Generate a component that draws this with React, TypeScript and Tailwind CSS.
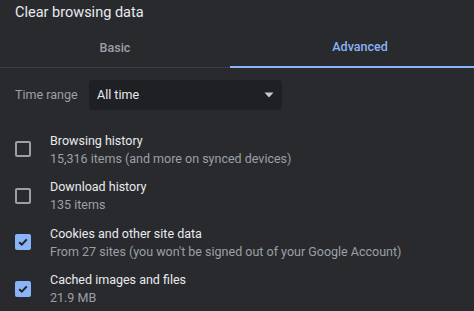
import React from "react";

type Item = { title: string; detail: string; checked: boolean };

const items: Item[] = [
  { title: "Browsing history", detail: "15,316 items (and more on synced devices)", checked: false },
  { title: "Download history", detail: "135 items", checked: false },
  { title: "Cookies and other site data", detail: "From 27 sites (you won't be signed out of your Google Account)", checked: true },
  { title: "Cached images and files", detail: "21.9 MB", checked: true },
];

const Checkbox = ({ checked }: { checked: boolean }) =>
  checked ? (
    <div className="flex h-[16px] w-[16px] items-center justify-center rounded-[2px] bg-[#8ab4f8]">
      <svg width="12" height="12" viewBox="0 0 12 12">
        <path d="M2.2 6.2 L4.8 8.6 L9.8 3.4" fill="none" stroke="#202124" strokeWidth="2" />
      </svg>
    </div>
  ) : (
    <div className="h-[16px] w-[16px] rounded-[2px] border-2 border-[#9aa0a6]" />
  );

export default function App() {
  return (
    <div
      className="h-[311px] w-[474px] overflow-hidden bg-[#292a2d] text-[#e8eaed]"
      style={{ fontFamily: "Roboto, 'Liberation Sans', sans-serif" }}
    >
      {/* Title */}
      <div className="h-[27px] pl-[15px] pt-[3px] text-[14.5px] leading-[20px]">Clear browsing data</div>

      {/* Tabs */}
      <div className="flex h-[41px] items-stretch">
        <div className="flex w-[230px] items-center justify-center border-b border-[#3c4043] pt-[2px] text-[12.5px] font-medium text-[#9aa0a6]">
          Basic
        </div>
        <div className="flex flex-1 items-center justify-center border-b-2 border-[#8ab4f8] pl-[16px] pt-[2px] text-[12.5px] font-medium text-[#8ab4f8]">
          Advanced
        </div>
      </div>

      {/* Time range */}
      <div className="mt-[12px] flex items-center pl-[15px]">
        <div className="w-[74px] pt-[1px] text-[12.5px] text-[#9aa0a6]">Time range</div>
        <div className="flex h-[30px] w-[193px] items-center justify-between rounded-[4px] bg-[#1f2023] pl-[8px] pr-[8px] text-[12.5px]">
          <span>All time</span>
          <svg width="10" height="6" viewBox="0 0 10 6">
            <path d="M0.5 0.5 L9.5 0.5 L5 5.5 Z" fill="#c8cacd" />
          </svg>
        </div>
      </div>

      {/* Items */}
      <div className="mt-[16px] flex flex-col">
        {items.map((it) => (
          <div key={it.title} className="flex h-[46.5px] items-center">
            <div className="flex w-[50px] justify-start pl-[15px]">
              <Checkbox checked={it.checked} />
            </div>
            <div className="flex flex-col pt-[1px] text-[12.5px] leading-[18px]">
              <span>{it.title}</span>
              <span className="text-[#9aa0a6]">{it.detail}</span>
            </div>
          </div>
        ))}
      </div>
    </div>
  );
}
